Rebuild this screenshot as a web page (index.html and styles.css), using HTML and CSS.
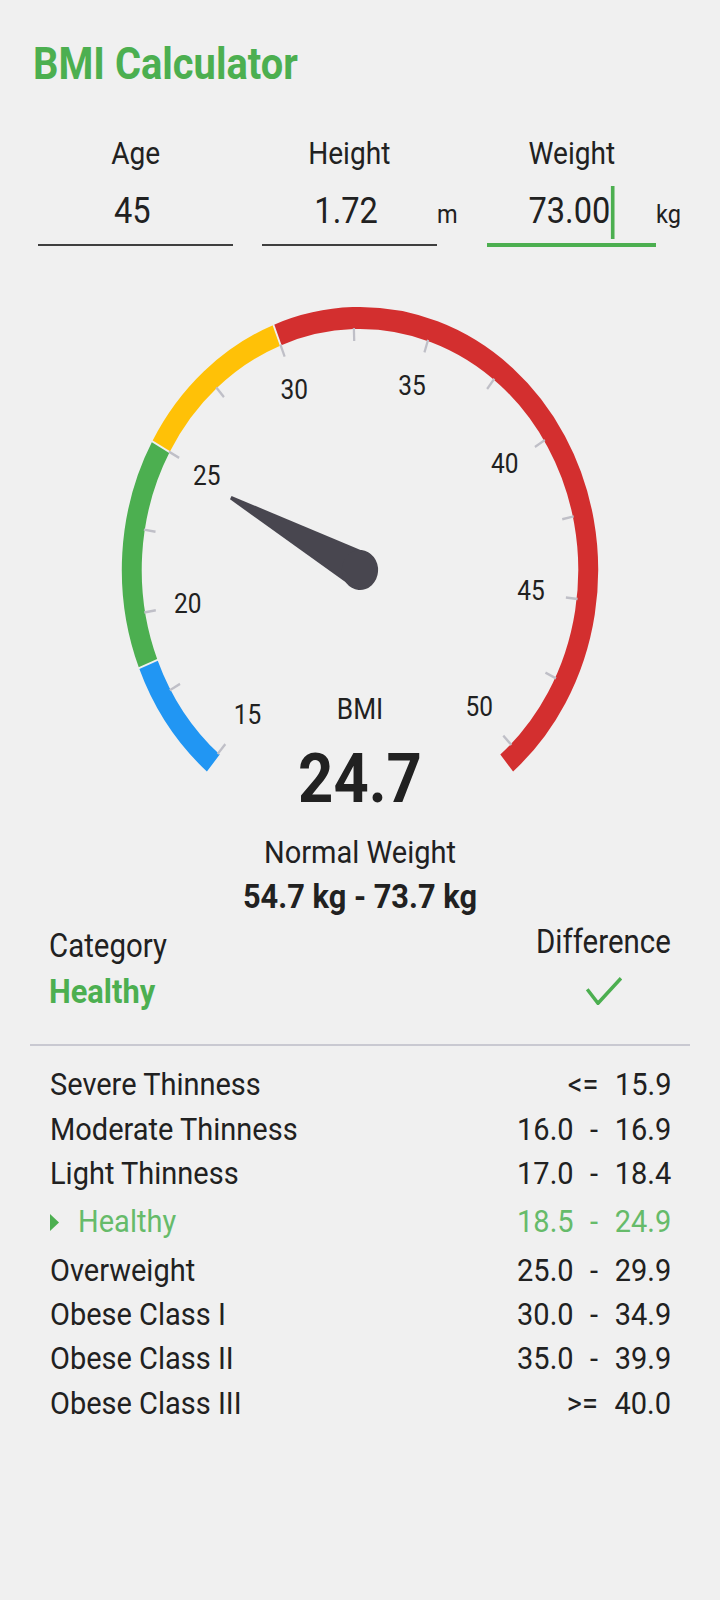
FILE: index.html
```html
<!DOCTYPE html>
<html lang="en">
<head>
<meta charset="utf-8">
<title>BMI Calculator</title>
<link rel="stylesheet" href="styles.css">
</head>
<body>
<div class="page">
  <h1 class="title sq sq-l">BMI Calculator</h1>

  <div class="inputs">
    <div class="input">
      <div class="input-label sq sq-c">Age</div>
      <div class="field field--idle"><span class="field-text sq sq-c">45</span></div>
    </div>
    <div class="input">
      <div class="input-label sq sq-c">Height</div>
      <div class="field field--idle"><span class="field-text sq sq-c">1.72</span></div>
      <div class="unit sq sq-l">m</div>
    </div>
    <div class="input">
      <div class="input-label sq sq-c">Weight</div>
      <div class="field field--focused"><span class="field-text sq sq-c">73.00<span class="cursor"></span></span></div>
      <div class="unit sq sq-l">kg</div>
    </div>
  </div>

  <div class="gauge">
    <svg class="gauge-svg" width="720" height="500" viewBox="0 0 795 500" preserveAspectRatio="none">
      <path class="arc arc--blue" d="M 235.52 482.04 A 252 252 0 0 1 163.69 383.0"/>
      <path class="arc arc--green" d="M 163.69 383.0 A 252 252 0 0 1 177.73 165.67"/>
      <path class="arc arc--yellow" d="M 177.73 165.67 A 252 252 0 0 1 305.95 54.21"/>
      <path class="arc arc--red" d="M 305.95 54.21 A 252 252 0 0 1 559.48 482.04"/>
      <line class="sep" x1="397.5" y1="24" x2="397.5" y2="50" transform="rotate(-111.9 397.5 289)"/>
      <line class="sep" x1="397.5" y1="24" x2="397.5" y2="50" transform="rotate(-60.7 397.5 289)"/>
      <line class="sep" x1="397.5" y1="24" x2="397.5" y2="50" transform="rotate(-21.3 397.5 289)"/>
      <g class="ticks">
        <line x1="397.5" y1="47" x2="397.5" y2="60" transform="rotate(-139.5 397.5 289)"/>
        <line x1="397.5" y1="47" x2="397.5" y2="60" transform="rotate(-119.8 397.5 289)"/>
        <line x1="397.5" y1="47" x2="397.5" y2="60" transform="rotate(-100.1 397.5 289)"/>
        <line x1="397.5" y1="47" x2="397.5" y2="60" transform="rotate(-80.4 397.5 289)"/>
        <line x1="397.5" y1="47" x2="397.5" y2="60" transform="rotate(-60.7 397.5 289)"/>
        <line x1="397.5" y1="47" x2="397.5" y2="60" transform="rotate(-41 397.5 289)"/>
        <line x1="397.5" y1="47" x2="397.5" y2="60" transform="rotate(-21.3 397.5 289)"/>
        <line x1="397.5" y1="47" x2="397.5" y2="60" transform="rotate(-1.6 397.5 289)"/>
        <line x1="397.5" y1="47" x2="397.5" y2="60" transform="rotate(18.1 397.5 289)"/>
        <line x1="397.5" y1="47" x2="397.5" y2="60" transform="rotate(37.8 397.5 289)"/>
        <line x1="397.5" y1="47" x2="397.5" y2="60" transform="rotate(57.5 397.5 289)"/>
        <line x1="397.5" y1="47" x2="397.5" y2="60" transform="rotate(77.2 397.5 289)"/>
        <line x1="397.5" y1="47" x2="397.5" y2="60" transform="rotate(96.9 397.5 289)"/>
        <line x1="397.5" y1="47" x2="397.5" y2="60" transform="rotate(116.6 397.5 289)"/>
        <line x1="397.5" y1="47" x2="397.5" y2="60" transform="rotate(136.3 397.5 289)"/>
      </g>
      <g class="tick-labels">
        <text x="273.3" y="442.6">15</text>
        <text x="207.4" y="331.9">20</text>
        <text x="228.4" y="203.6">25</text>
        <text x="324.9" y="117.9">30</text>
        <text x="454.9" y="113.6">35</text>
        <text x="557.3" y="191.9">40</text>
        <text x="586.4" y="319.3">45</text>
        <text x="529.3" y="434.6">50</text>
      </g>
      <g class="needle" transform="rotate(-63.1 397.5 289)">
        <polygon points="378.3,291 395.6,129 399.4,129 416.7,291"/>
        <circle cx="397.5" cy="289" r="20"/>
      </g>
    </svg>
    <div class="readout">
      <div class="readout-label sq sq-c">BMI</div>
      <div class="readout-value sq sq-c">24.7</div>
    </div>
  </div>

  <div class="range">
    <div class="range-title sq sq-c">Normal Weight</div>
    <div class="range-value sq sq-c">54.7 kg - 73.7 kg</div>
  </div>

  <div class="summary">
    <div class="summary-col summary-col--left">
      <div class="summary-label sq sq-l">Category</div>
      <div class="summary-category sq sq-l">Healthy</div>
    </div>
    <div class="summary-col summary-col--right">
      <div class="summary-label sq sq-c">Difference</div>
      <svg class="check" width="36" height="28" viewBox="0 0 36 28">
        <polyline points="1.2,12.3 12,26.3 35,1.3"/>
      </svg>
    </div>
  </div>

  <div class="divider"></div>

  <ul class="table">
    <li class="row"><span class="row-name sq sq-l">Severe Thinness</span><span class="row-range sq sq-r">&lt;=  15.9</span></li>
    <li class="row"><span class="row-name sq sq-l">Moderate Thinness</span><span class="row-range sq sq-r">16.0  -  16.9</span></li>
    <li class="row"><span class="row-name sq sq-l">Light Thinness</span><span class="row-range sq sq-r">17.0  -  18.4</span></li>
    <li class="row row--active"><span class="row-name sq sq-l"><svg class="marker" width="10" height="17" viewBox="0 0 10 17"><polygon points="0,0 10,8.5 0,17"/></svg>Healthy</span><span class="row-range sq sq-r">18.5  -  24.9</span></li>
    <li class="row"><span class="row-name sq sq-l">Overweight</span><span class="row-range sq sq-r">25.0  -  29.9</span></li>
    <li class="row"><span class="row-name sq sq-l">Obese Class I</span><span class="row-range sq sq-r">30.0  -  34.9</span></li>
    <li class="row"><span class="row-name sq sq-l">Obese Class II</span><span class="row-range sq sq-r">35.0  -  39.9</span></li>
    <li class="row"><span class="row-name sq sq-l">Obese Class III</span><span class="row-range sq sq-r">&gt;=  40.0</span></li>
  </ul>
</div>
</body>
</html>
```

FILE: styles.css
```css
html, body {
  margin: 0;
  padding: 0;
  background: #f0f0f0;
}

body {
  font-family: Roboto, "Noto Sans", "Liberation Sans", sans-serif;
  color: #212121;
}

.page {
  width: 720px;
  min-height: 1600px;
  padding-top: 38px;
  box-sizing: border-box;
}

/* The captured app renders its type slightly condensed */
.sq { transform: scaleX(0.9057); }
.sq-l { transform-origin: left center; }
.sq-c { transform-origin: center center; }
.sq-r { transform-origin: right center; }

.title {
  margin: 0 0 0 33px;
  font-size: 44px;
  line-height: 52px;
  font-weight: 700;
  color: #4caf50;
}

/* Inputs */
.inputs {
  display: flex;
  gap: 29px;
  padding: 0 38px;
  margin-top: 46px;
}

.input {
  flex: 1;
  display: grid;
  grid-template-columns: 1fr auto;
  align-items: baseline;
}

.input-label {
  grid-column: 1;
  grid-row: 1;
  text-align: center;
  font-size: 31px;
  line-height: 36px;
}

.field {
  grid-column: 1;
  grid-row: 2;
  margin-top: 16.5px;
  text-align: center;
  font-size: 36px;
  line-height: 44px;
}

.field--idle {
  padding: 0 7px 11px 0;
  border-bottom: 2.5px solid #3f3f3f;
}

.field--focused {
  padding-bottom: 10px;
  border-bottom: 4px solid #4caf50;
}

.field-text {
  display: inline-block;
}

.cursor {
  display: inline-block;
  width: 3.5px;
  height: 53px;
  margin: -3px 0 -7px 1px;
  vertical-align: -9px;
  background: #4caf50;
}

.unit {
  grid-column: 2;
  grid-row: 2;
  margin-right: -2px;
  font-size: 26px;
}

/* Gauge */
.gauge {
  position: relative;
  margin-top: 34px;
  height: 500px;
}

.gauge-svg {
  display: block;
}

.arc {
  fill: none;
  stroke-width: 22;
}

.arc--blue { stroke: #2196f3; }
.arc--green { stroke: #4caf50; }
.arc--yellow { stroke: #ffc107; }
.arc--red { stroke: #d32f2f; }

.sep {
  stroke: #f0f0f0;
  stroke-width: 2;
}

.ticks line {
  stroke: #bfbfc7;
  stroke-width: 2.5;
}

.tick-labels text {
  font-family: Roboto, "Noto Sans", sans-serif;
  font-size: 27px;
  fill: #212121;
  text-anchor: middle;
}

.needle {
  fill: #48464f;
}

.readout {
  position: absolute;
  top: 410px;
  left: 0;
  right: 0;
  text-align: center;
}

.readout-label {
  font-size: 29px;
  line-height: 36px;
}

.readout-value {
  margin-top: 17.5px;
  font-size: 68px;
  line-height: 70px;
  font-weight: 700;
}

/* Range */
.range {
  margin-top: 52px;
  text-align: center;
}

.range-title {
  font-size: 32px;
  line-height: 38px;
}

.range-value {
  margin-top: 5.3px;
  font-size: 34px;
  line-height: 40px;
  font-weight: 700;
}

/* Summary */
.summary {
  display: flex;
  justify-content: space-between;
  align-items: flex-start;
  padding: 0 42px 0 49px;
  margin-top: 7.7px;
}

.summary-col {
  display: flex;
  flex-direction: column;
}

.summary-col--left {
  padding-top: 3.3px;
}

.summary-col--right {
  align-items: center;
}

.summary-label {
  font-size: 32.5px;
  line-height: 38px;
}

.summary-category {
  margin-top: 6px;
  font-size: 34px;
  line-height: 40px;
  font-weight: 700;
  color: #4caf50;
}

.check {
  display: block;
  margin-top: 16px;
}

.check polyline {
  fill: none;
  stroke: #4caf50;
  stroke-width: 3.5;
}

.divider {
  height: 2px;
  margin: 33.6px 30px 0;
  background: #c9c9d1;
}

/* Table */
.table {
  list-style: none;
  margin: 0;
  padding: 16px 49px 0 50px;
}

.row {
  display: flex;
  justify-content: space-between;
  font-size: 32px;
  line-height: 44.35px;
}

.row-name,
.row-range {
  white-space: pre;
}

.row-range {
  word-spacing: 1.2px;
}

.row--active {
  padding: 4px 0;
  color: #66bb6a;
}

.marker {
  margin-right: 21px;
  vertical-align: 1px;
}

.marker polygon {
  fill: #4caf50;
}
```
